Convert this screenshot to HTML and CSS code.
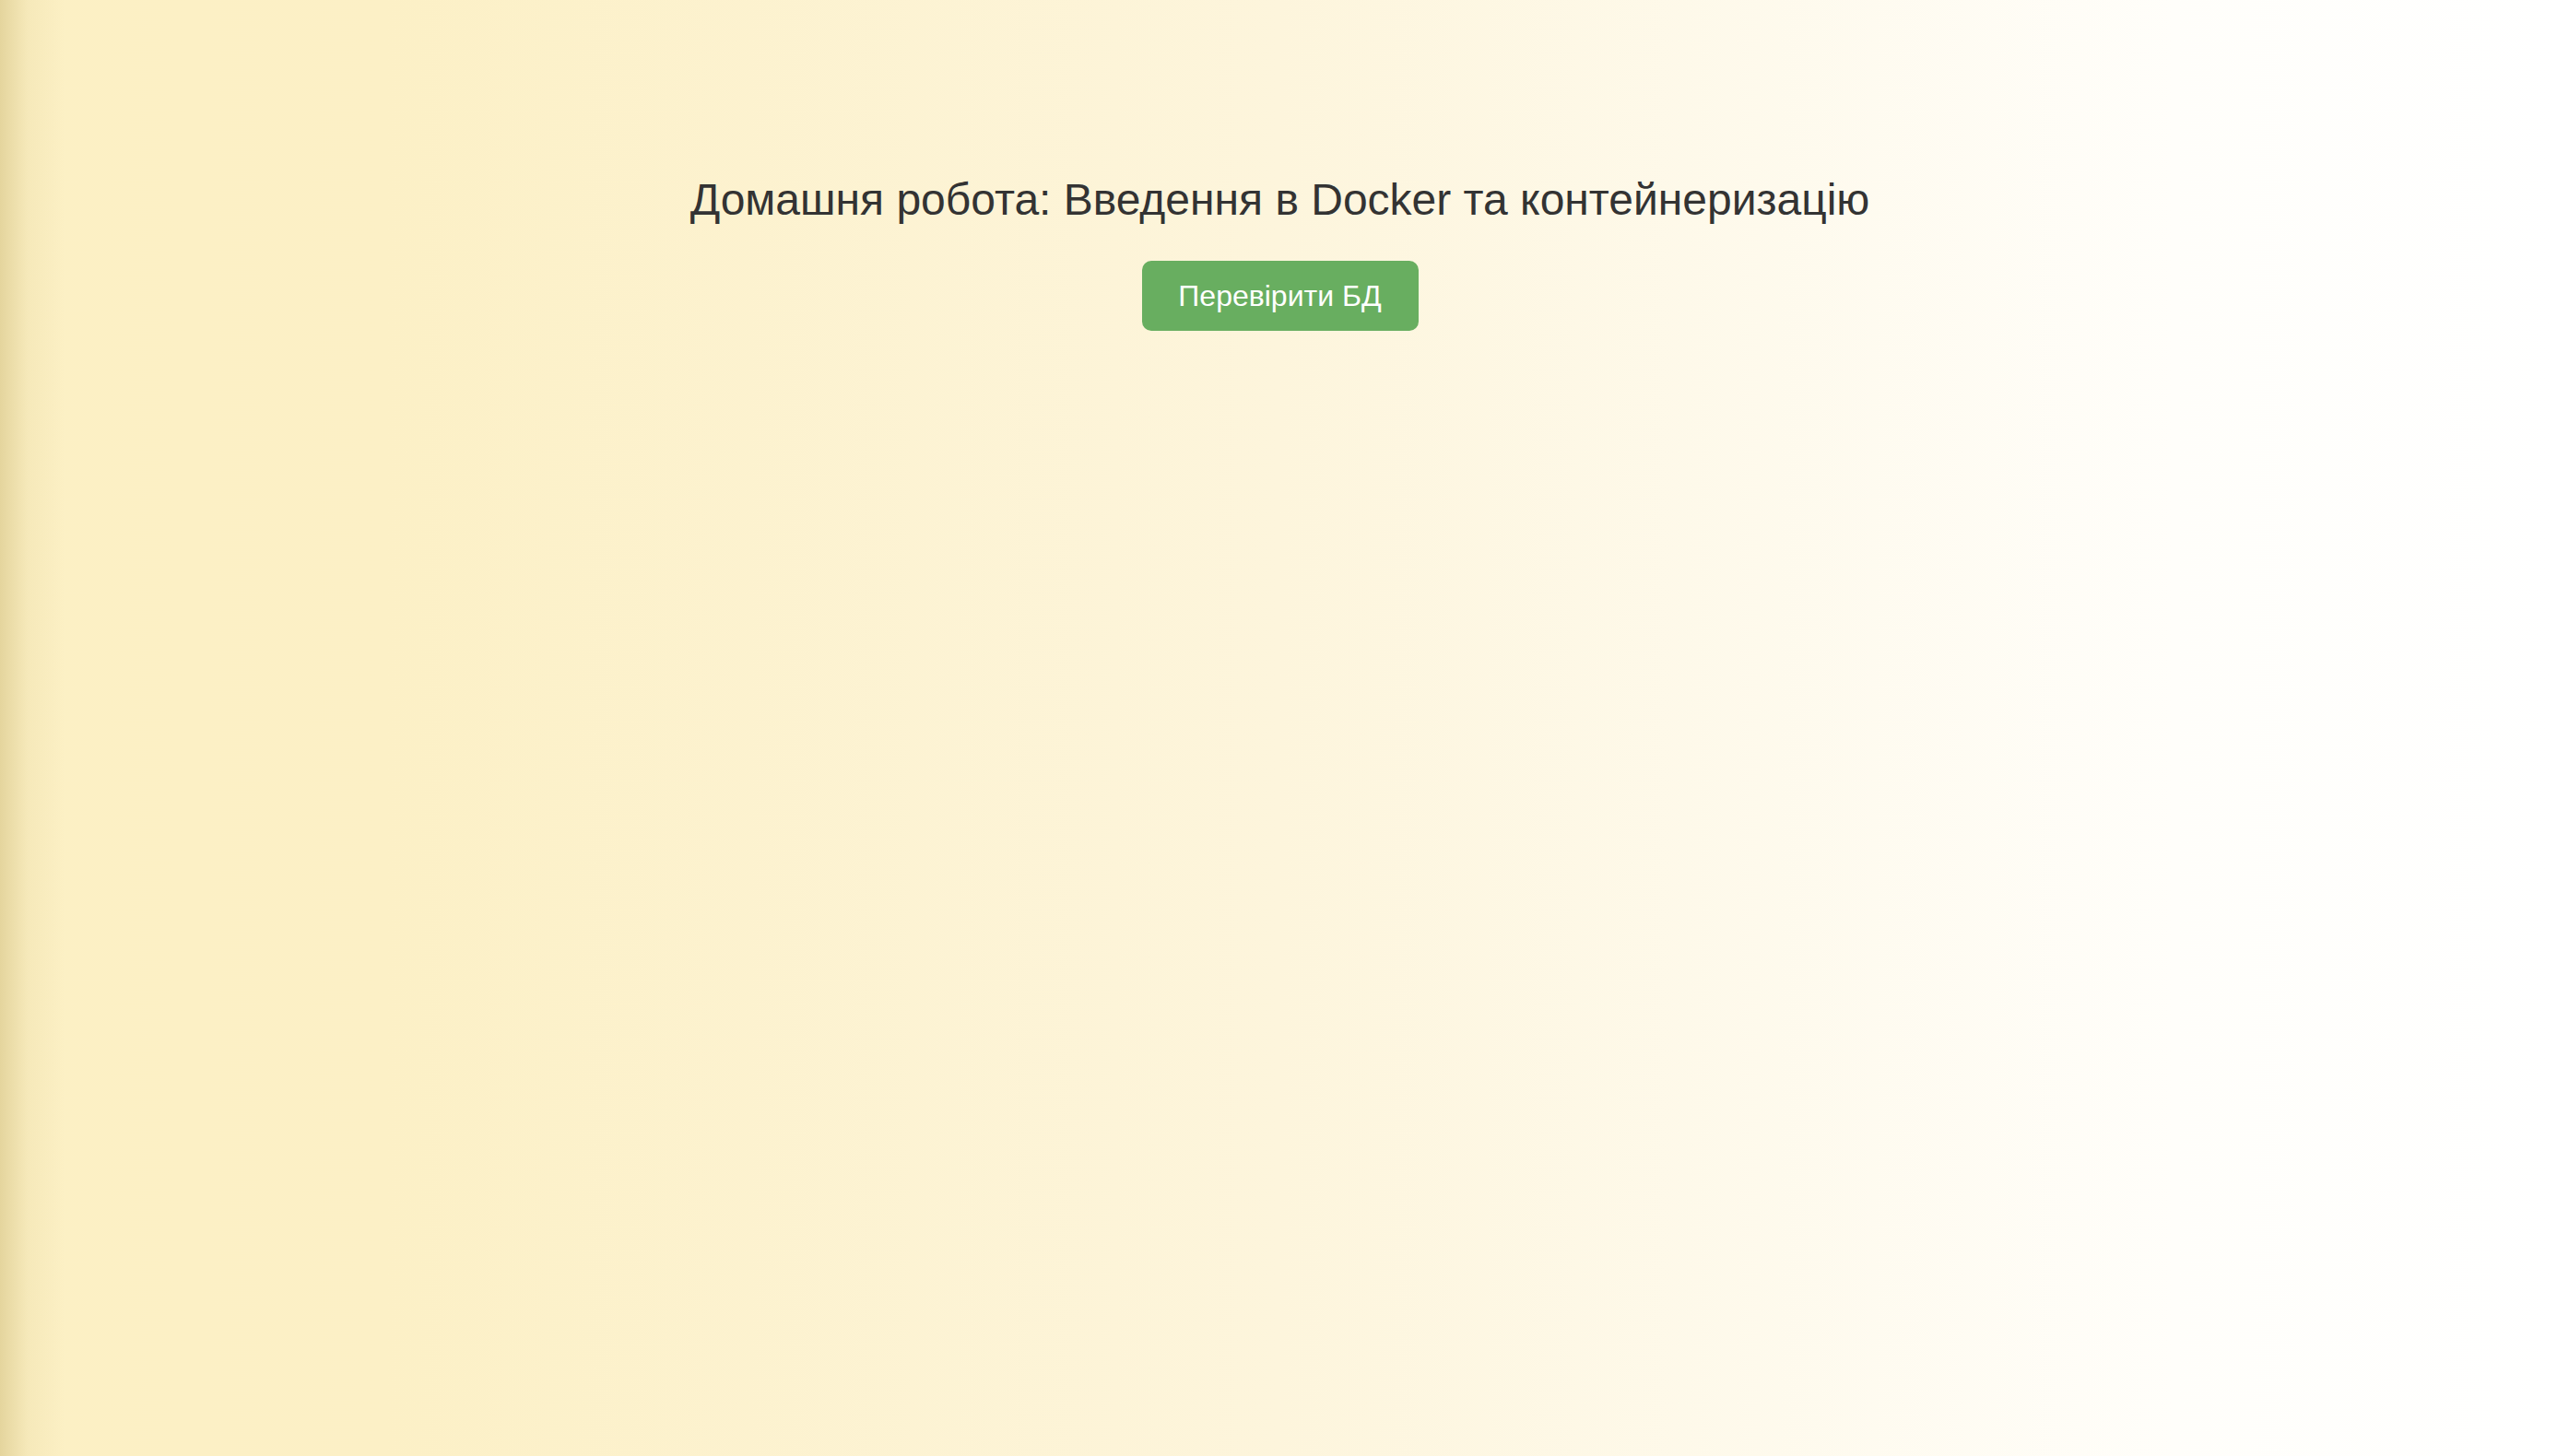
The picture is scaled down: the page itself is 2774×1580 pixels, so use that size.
FILE: index.html
```html
<!DOCTYPE html>
<html lang="uk">
<head>
<meta charset="utf-8">
<title>Docker</title>
<link rel="stylesheet" href="styles.css">
</head>
<body>
<main class="page">
  <h2 class="title">Домашня робота: Введення в Docker та контейнеризацію</h2>
  <button class="check-btn" type="button">Перевірити БД</button>
</main>
</body>
</html>
```

FILE: styles.css
```css
html, body {
  margin: 0;
  height: 100%;
}
body {
  background:
    linear-gradient(to right, rgba(200, 180, 110, 0.45) 0px, rgba(200, 180, 110, 0.12) 30px, rgba(200, 180, 110, 0) 70px),
    linear-gradient(to right, #fcf0c4 0%, #fcf0c6 15%, #fdf5dc 50%, #fffefa 85%, #ffffff 100%);
  font-family: "Liberation Sans", Arial, Helvetica, sans-serif;
}
.page {
  display: flex;
  flex-direction: column;
  align-items: center;
  padding-top: 189px;
  padding-left: 3px;
}
.title {
  margin: 0 0 39px;
  font-size: 48px;
  font-weight: normal;
  color: #333333;
  line-height: 55px;
}
.check-btn {
  font-family: inherit;
  font-size: 32px;
  color: #ffffff;
  background: #68ae60;
  border: none;
  border-radius: 10px;
  padding: 0;
  height: 76px;
  width: 300px;
  white-space: nowrap;
}
```
